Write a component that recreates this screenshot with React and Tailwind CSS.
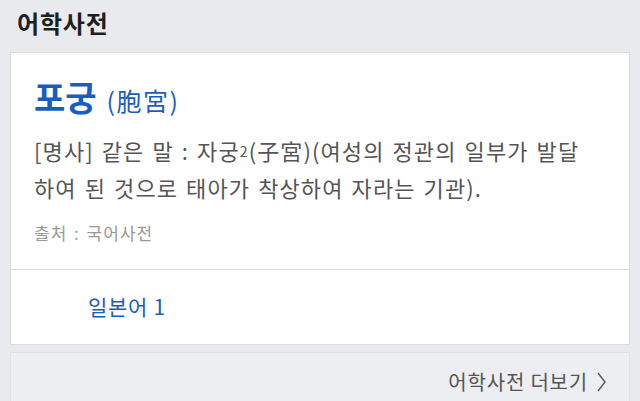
import React from 'react'

const FONT = '"Noto Sans CJK KR", "Noto Sans", sans-serif'

export default function App() {
  return (
    <div
      className="w-[640px] h-[401px] overflow-hidden bg-[#e8eaed] px-[10px]"
      style={{ fontFamily: FONT }}
    >
      <h2 className="pl-[7px] pt-[5px] h-[52px] text-[24px] leading-[36px] font-bold text-[#1e1e1e] tracking-[0.8px]">
        어학사전
      </h2>

      <div className="bg-white border border-[#dcdee2]">
        <div className="h-[216px] px-[23px] pt-[22px]">
          <div className="flex items-baseline gap-[10px] text-[#1a5dc0]">
            <span className="text-[34px] font-bold leading-[44px]">포궁</span>
            <span className="text-[25px] tracking-[1.5px]">(胞宮)</span>
          </div>
          <p className="mt-[12px] text-[22px] leading-[37px] text-[#555] tracking-[1.1px] [word-spacing:2px]">
            [명사] 같은 말 : 자궁<sup className="text-[14px] relative -top-[3px]">2</sup>(子宮)(여성의 정관의 일부가 발달
            <br />
            하여 된 것으로 태아가 착상하여 자라는 기관).
          </p>
          <p className="mt-[15px] text-[17px] leading-[24px] text-[#999] tracking-[1px] [word-spacing:2px]">
            출처 : 국어사전
          </p>
        </div>
        <div className="border-t border-[#dcdee2] h-[75px] flex items-center pl-[77px]">
          <a className="text-[21px] text-[#1a5dc0] tracking-[0.7px]">일본어 1</a>
        </div>
      </div>

      <div className="mt-[7px] h-[60px] bg-[#eceef1] border border-[#dfe1e5] flex items-start pt-[15px] justify-end pr-[22px] gap-[8px] text-[#555]">
        <span className="text-[20px] leading-[28px] tracking-[0.8px]">어학사전 더보기</span>
        <svg width="11" height="28" viewBox="0 0 11 28" fill="none">
          <path d="M2 5L9 14L2 23" stroke="currentColor" strokeWidth="1.4" />
        </svg>
      </div>
    </div>
  )
}
